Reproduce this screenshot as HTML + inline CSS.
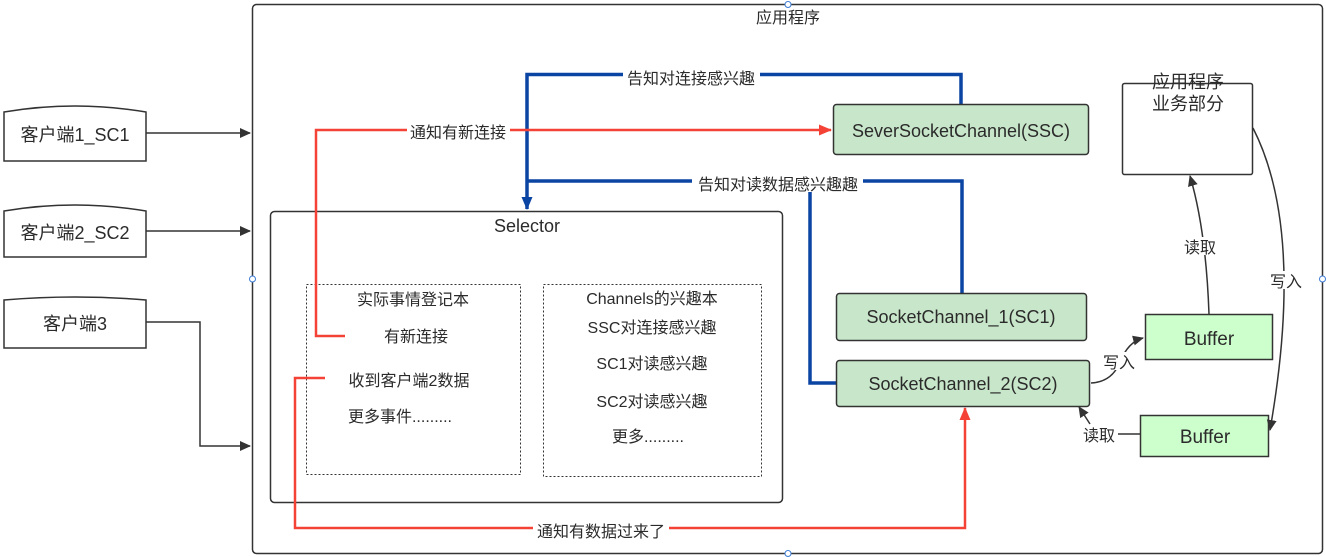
<!DOCTYPE html>
<html><head><meta charset="utf-8"><style>
html,body{margin:0;padding:0;background:#fff;width:1326px;height:557px;overflow:hidden}
svg text{font-family:"Liberation Sans","Noto Sans CJK SC",sans-serif;fill:#2b2b2b}
</style></head><body>
<svg width="1326" height="557" viewBox="0 0 1326 557" xmlns="http://www.w3.org/2000/svg">
<defs>
<marker id="ab" markerWidth="12" markerHeight="12" refX="10" refY="6" orient="auto" markerUnits="userSpaceOnUse"><path d="M0,1 L11,6 L0,11 Z" fill="#333"/></marker>
<marker id="ablue" markerWidth="14" markerHeight="14" refX="12" refY="7" orient="auto" markerUnits="userSpaceOnUse"><path d="M0,1.5 L13,7 L0,12.5 Z" fill="#0b45a3"/></marker>
<marker id="ared" markerWidth="14" markerHeight="14" refX="12" refY="7" orient="auto" markerUnits="userSpaceOnUse"><path d="M0,1.5 L13,7 L0,12.5 Z" fill="#f44336"/></marker>
</defs>
<rect x="252.5" y="4.5" width="1070" height="549" rx="4" fill="none" stroke="#333" stroke-width="1.5"/>
<circle cx="788" cy="4.5" r="3" fill="#fff" stroke="#3a7bd5"/>
<circle cx="252.5" cy="279" r="3" fill="#fff" stroke="#3a7bd5"/>
<circle cx="1322.5" cy="279" r="3" fill="#fff" stroke="#3a7bd5"/>
<circle cx="788" cy="553.5" r="3" fill="#fff" stroke="#3a7bd5"/>
<text x="788" y="23" font-size="16" text-anchor="middle">应用程序</text>
<path d="M4,112 Q75,100 146,112 L146,161 L4,161 Z" fill="#fff" stroke="#333" stroke-width="1.5"/>
<text x="75" y="141" font-size="18" text-anchor="middle">客户端1_SC1</text>
<path d="M4,211 Q75,199 146,211 L146,257 L4,257 Z" fill="#fff" stroke="#333" stroke-width="1.5"/>
<text x="75" y="239" font-size="18" text-anchor="middle">客户端2_SC2</text>
<path d="M4,300 Q75,294 146,300 L146,348 L4,348 Z" fill="#fff" stroke="#333" stroke-width="1.5"/>
<text x="75" y="330" font-size="18" text-anchor="middle">客户端3</text>
<path d="M146,133 L250,133" stroke="#333" stroke-width="1.5" fill="none" marker-end="url(#ab)"/>
<path d="M146,231 L250,231" stroke="#333" stroke-width="1.5" fill="none" marker-end="url(#ab)"/>
<path d="M146,322 L200,322 L200,446 L250,446" stroke="#333" stroke-width="1.5" fill="none" marker-end="url(#ab)"/>
<rect x="270.5" y="211.5" width="512" height="291" rx="4" fill="#fff" stroke="#333" stroke-width="1.5"/>
<text x="527" y="232" font-size="18" text-anchor="middle">Selector</text>
<rect x="306.5" y="284.5" width="214" height="190" fill="none" stroke="#333" stroke-dasharray="2,2"/>
<rect x="543.5" y="284.5" width="218" height="192" fill="none" stroke="#333" stroke-dasharray="2,2"/>
<text x="413" y="305" font-size="16" text-anchor="middle">实际事情登记本</text>
<text x="416" y="342" font-size="16" text-anchor="middle">有新连接</text>
<text x="409" y="386" font-size="16" text-anchor="middle">收到客户端2数据</text>
<text x="400" y="422" font-size="16" text-anchor="middle">更多事件.........</text>
<text x="652" y="304" font-size="16" text-anchor="middle">Channels的兴趣本</text>
<text x="652" y="333" font-size="16" text-anchor="middle">SSC对连接感兴趣</text>
<text x="652" y="369" font-size="16" text-anchor="middle">SC1对读感兴趣</text>
<text x="652" y="407" font-size="16" text-anchor="middle">SC2对读感兴趣</text>
<text x="648" y="442" font-size="16" text-anchor="middle">更多.........</text>
<path d="M961,104 L961,74.5 L527,74.5 L527,209" stroke="#0b45a3" stroke-width="3.5" fill="none" marker-end="url(#ablue)"/>
<path d="M962,293 L962,181 L527,181" stroke="#0b45a3" stroke-width="3.5" fill="none"/>
<path d="M836,383 L810,383 L810,181" stroke="#0b45a3" stroke-width="3.5" fill="none"/>
<rect x="623" y="68" width="137" height="18" fill="#fff"/>
<text x="691" y="84" font-size="16" text-anchor="middle">告知对连接感兴趣</text>
<rect x="692" y="174" width="171" height="18" fill="#fff"/>
<text x="778" y="190" font-size="16" text-anchor="middle">告知对读数据感兴趣趣</text>
<path d="M345,336 L316,336 L316,130 L831,130" stroke="#f44336" stroke-width="2.5" fill="none" marker-end="url(#ared)"/>
<rect x="407" y="122" width="103" height="18" fill="#fff"/>
<text x="458" y="138" font-size="16" text-anchor="middle">通知有新连接</text>
<path d="M325,378 L295,378 L295,528 L965,528 L965,408" stroke="#f44336" stroke-width="2.5" fill="none" marker-end="url(#ared)"/>
<rect x="533" y="520" width="136" height="18" fill="#fff"/>
<text x="601" y="537" font-size="16" text-anchor="middle">通知有数据过来了</text>
<rect x="833.5" y="104.5" width="255" height="50" rx="3" fill="#c8e6c9" stroke="#333" stroke-width="1.5"/>
<text x="961" y="137" font-size="18" text-anchor="middle">SeverSocketChannel(SSC)</text>
<rect x="836.5" y="293.5" width="250" height="47" rx="3" fill="#c8e6c9" stroke="#333" stroke-width="1.5"/>
<text x="961" y="323" font-size="18" text-anchor="middle">SocketChannel_1(SC1)</text>
<rect x="836.5" y="360.5" width="253" height="46" rx="3" fill="#c8e6c9" stroke="#333" stroke-width="1.5"/>
<text x="963" y="390" font-size="18" text-anchor="middle">SocketChannel_2(SC2)</text>
<rect x="1145.5" y="314.5" width="127" height="45" fill="#ccffcc" stroke="#333" stroke-width="1.5"/>
<text x="1209" y="345" font-size="19" text-anchor="middle">Buffer</text>
<rect x="1140.5" y="415.5" width="128" height="41" fill="#ccffcc" stroke="#333" stroke-width="1.5"/>
<text x="1205" y="443" font-size="19" text-anchor="middle">Buffer</text>
<rect x="1122.5" y="83.5" width="130" height="91" rx="2" fill="#fff" stroke="#333" stroke-width="1.5"/>
<text x="1188" y="88" font-size="18" text-anchor="middle">应用程序</text>
<text x="1188" y="110" font-size="18" text-anchor="middle">业务部分</text>
<path d="M1091,383 Q1112,382 1120,362 Q1128,342 1143,338" stroke="#333" stroke-width="1.5" fill="none" marker-end="url(#ab)"/>
<rect x="1102" y="352" width="34" height="18" fill="#fff"/>
<text x="1119" y="368" font-size="16" text-anchor="middle">写入</text>
<path d="M1140,434 L1118,434" stroke="#333" stroke-width="1.5" fill="none"/>
<path d="M1090,424 L1079,407" stroke="#333" stroke-width="1.5" fill="none" marker-end="url(#ab)"/>
<text x="1099" y="441" font-size="16" text-anchor="middle">读取</text>
<path d="M1209,314 Q1206,230 1190,176" stroke="#333" stroke-width="1.5" fill="none" marker-end="url(#ab)"/>
<rect x="1183" y="237" width="34" height="18" fill="#fff"/>
<text x="1200" y="253" font-size="16" text-anchor="middle">读取</text>
<path d="M1253,128 Q1305,230 1270,430" stroke="#333" stroke-width="1.5" fill="none" marker-end="url(#ab)"/>
<rect x="1269" y="271" width="34" height="18" fill="#fff"/>
<text x="1286" y="287" font-size="16" text-anchor="middle">写入</text>
</svg>
</body></html>
